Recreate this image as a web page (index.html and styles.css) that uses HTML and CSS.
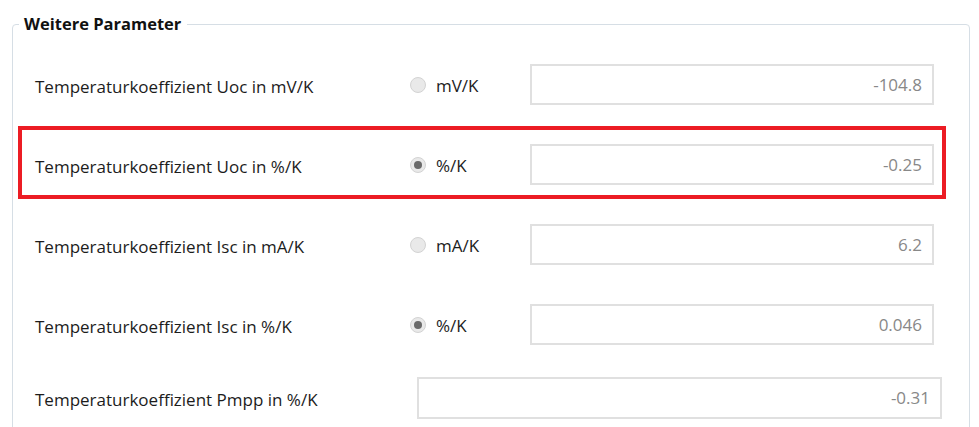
FILE: index.html
```html
<!DOCTYPE html>
<html lang="de">
<head>
<meta charset="utf-8">
<title>Weitere Parameter</title>
<link rel="stylesheet" href="styles.css">
</head>
<body>
<fieldset class="group">
  <legend class="group-title">Weitere Parameter</legend>
  <div class="row">
    <span class="label">Temperaturkoeffizient Uoc in mV/K</span>
    <label class="option"><span class="radio"></span><span class="option-text">mV/K</span></label>
    <div class="field">-104.8</div>
  </div>
  <div class="row row-highlight">
    <span class="label">Temperaturkoeffizient Uoc in %/K</span>
    <label class="option"><span class="radio radio-checked"></span><span class="option-text">%/K</span></label>
    <div class="field">-0.25</div>
  </div>
  <div class="row">
    <span class="label">Temperaturkoeffizient Isc in mA/K</span>
    <label class="option"><span class="radio"></span><span class="option-text">mA/K</span></label>
    <div class="field">6.2</div>
  </div>
  <div class="row">
    <span class="label">Temperaturkoeffizient Isc in %/K</span>
    <label class="option"><span class="radio radio-checked"></span><span class="option-text">%/K</span></label>
    <div class="field">0.046</div>
  </div>
  <div class="row row-last">
    <span class="label label-wide">Temperaturkoeffizient Pmpp in %/K</span>
    <div class="field">-0.31</div>
  </div>
</fieldset>
</body>
</html>
```
FILE: styles.css
```css
html, body {
  margin: 0;
  padding: 0;
  overflow: hidden;
  background: #ffffff;
}

body {
  font-family: "Open Sans", "Noto Sans", sans-serif;
  color: #1c1c1c;
  width: 979px;
  height: 427px;
}

.group {
  margin: 14px 0 0 12px;
  width: 958px;
  height: 500px;
  box-sizing: border-box;
  border: 1px solid #d6dee5;
  border-radius: 4px;
  padding: 16px 27px 0 9px;
  min-width: 0;
}

.group-title {
  font-weight: 700;
  font-size: 16.5px;
  line-height: 20px;
  padding: 0 6px 0 5px;
  margin-left: -3px;
  color: #111111;
}

.row {
  display: flex;
  align-items: center;
  height: 65px;
  box-sizing: border-box;
  padding: 3px 8px 0 13px;
  margin-bottom: 15px;
}

.row-highlight {
  outline: 4px solid #ec1c24;
}

.row-last {
  margin-top: -8px;
  padding-right: 0;
  height: 68px;
}

.label {
  width: 375px;
  flex: none;
  font-size: 17px;
  margin-top: 4px;
}

.label-wide {
  width: 382px;
}

.option {
  width: 120px;
  flex: none;
  display: flex;
  align-items: center;
  gap: 10px;
  font-size: 17px;
  margin-top: 1px;
}

.radio {
  width: 16px;
  height: 16px;
  box-sizing: border-box;
  border-radius: 50%;
  border: 1px solid #d3d3d3;
  background: #e9e9e9;
  display: flex;
  align-items: center;
  justify-content: center;
  flex: none;
}

.radio-checked::after {
  content: "";
  width: 8px;
  height: 8px;
  border-radius: 50%;
  background: #6a6a6a;
}

.option-text {
  color: #1c1c1c;
  position: relative;
  top: 1px;
}

.field {
  flex: 1;
  height: 41px;
  box-sizing: border-box;
  border: 2px solid #e0e0e0;
  display: flex;
  align-items: center;
  justify-content: flex-end;
  padding-right: 10px;
  font-size: 17px;
  color: #888888;
}

.row-last .field {
  height: 42px;
}
```
